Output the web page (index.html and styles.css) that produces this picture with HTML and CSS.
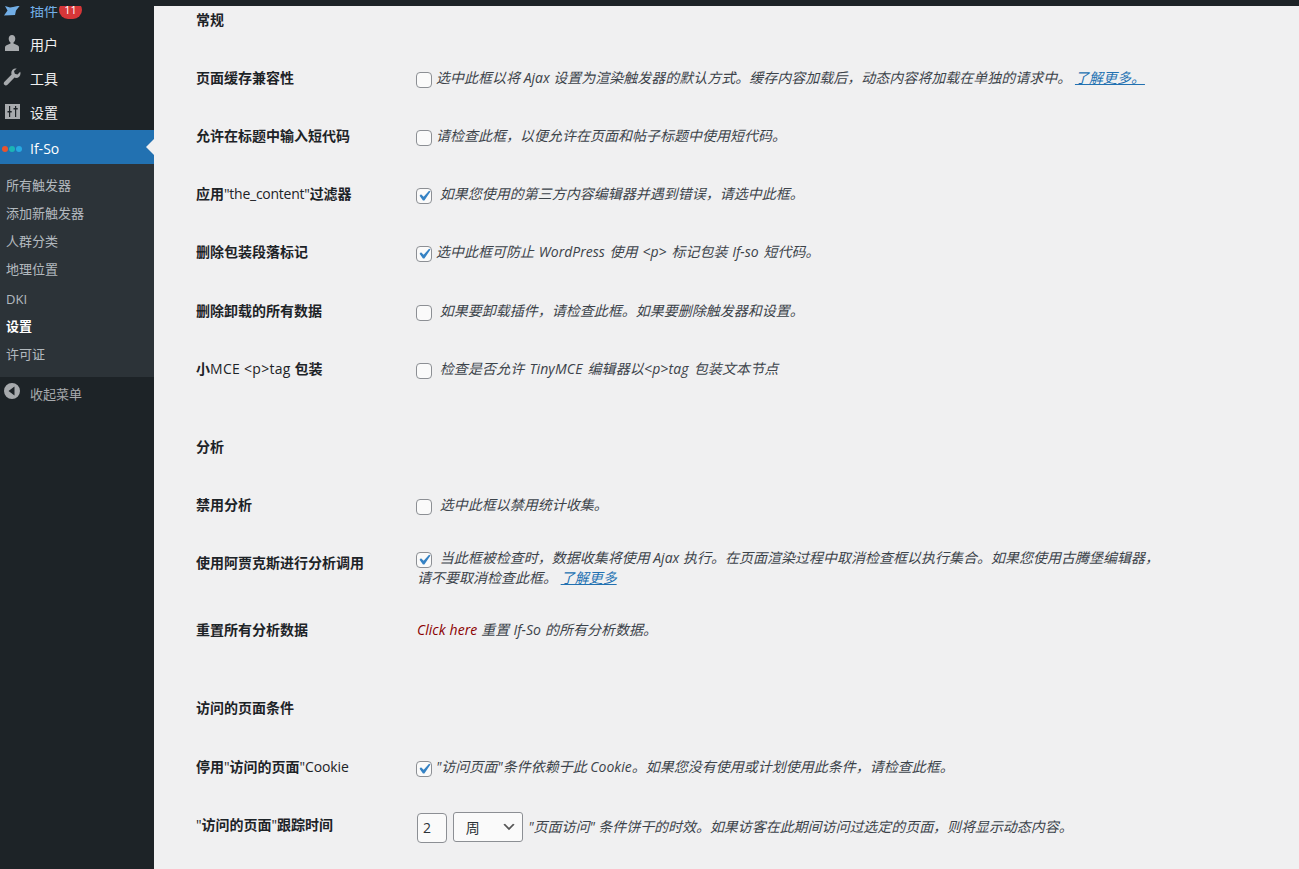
FILE: index.html
```html
<!DOCTYPE html>
<html lang="zh-CN">
<head>
<meta charset="utf-8">
<title>If-So 设置</title>
<link rel="stylesheet" href="styles.css">
</head>
<body>
<div class="adminbar"></div>
<div class="layout">
  <nav class="sidebar">
    <ul class="menu">
      <li class="item plugin">
        <svg class="icon" viewBox="0 0 20 20"><path d="M3 6l5 1.500 3-.5 7-1.500-4 5-1 4.500-11 .5 3.500-5z"/></svg>
        <span>插件</span><span class="badge">11</span>
      </li>
      <li class="item">
        <svg class="icon" viewBox="0 0 20 20"><path d="M10 2c2 0 3.300 1.700 3.300 3.700 0 1.500-.7 3-1.800 3.800v1l4 1.700c1 .5 1.500 1.200 1.500 2.300V18H3v-3.500c0-1.100.5-1.800 1.500-2.300l4-1.700v-1C7.400 8.700 6.700 7.200 6.700 5.700 6.700 3.700 8 2 10 2z"/></svg>
        <span>用户</span>
      </li>
      <li class="item">
        <svg class="icon" viewBox="0 0 20 20"><path d="M13.800 1.500c-2.600 0-4.500 2.100-4.500 4.500 0 .6.100 1.100.3 1.600L2.500 14.700c-1 1-1 2.300-.1 3.100.9.900 2.200.8 3.100-.1l7-7.100c.5.200 1 .3 1.500.3 2.500 0 4.500-2 4.500-4.500 0-.6-.1-1.100-.3-1.600l-2.700 2.700-2.700-.8-.8-2.700 2.700-2.500c-.4 0-.9 0-.9 0z"/></svg>
        <span>工具</span>
      </li>
      <li class="item">
        <svg class="icon" viewBox="0 0 20 20"><path fill-rule="evenodd" d="M3 3h15v15H3zM7 5v5H5.500v1.500H7V16h1.200v-4.500h1.500V10H8.200V5zM13 5v2h-1.500v1.500H13V16h1.200V8.500h1.500V7h-1.500V5z"/></svg>
        <span>设置</span>
      </li>
      <li class="item current">
        <span class="dots"><i class="dot red"></i><i class="dot teal"></i><i class="dot blue"></i></span>
        <span>If-So</span>
      </li>
    </ul>
    <ul class="submenu">
      <li>所有触发器</li>
      <li>添加新触发器</li>
      <li>人群分类</li>
      <li>地理位置</li>
      <li class="latin-item">DKI</li>
      <li class="active">设置</li>
      <li>许可证</li>
    </ul>
    <div class="item collapse">
      <svg class="icon" viewBox="0 0 20 20"><path fill-rule="evenodd" d="M10 2a8 8 0 1 1 0 16 8 8 0 0 1 0-16zM12.500 5.500L6.500 10l6 4.500z"/></svg>
      <span>收起菜单</span>
    </div>
  </nav>
  <main class="content">
    <section class="group">
      <div class="row"><h2 class="label">常规</h2></div>
      <div class="row">
        <div class="label">页面缓存兼容性</div>
        <div class="value"><input type="checkbox" class="check"><em>选中此框以将 Ajax 设置为渲染触发器的默认方式。缓存内容加载后，动态内容将加载在单独的请求中。 <a href="#">了解更多。</a></em></div>
      </div>
      <div class="row">
        <div class="label">允许在标题中输入短代码</div>
        <div class="value"><input type="checkbox" class="check"><em>请检查此框，以便允许在页面和帖子标题中使用短代码。</em></div>
      </div>
      <div class="row">
        <div class="label">应用<span class="latin narrow">"the_content"</span>过滤器</div>
        <div class="value"><input type="checkbox" class="check" checked> <em>如果您使用的第三方内容编辑器并遇到错误，请选中此框。</em></div>
      </div>
      <div class="row">
        <div class="label">删除包装段落标记</div>
        <div class="value"><input type="checkbox" class="check" checked><em class="wide">选中此框可防止 WordPress 使用 &lt;p&gt; 标记包装 If-so 短代码。</em></div>
      </div>
      <div class="row">
        <div class="label">删除卸载的所有数据</div>
        <div class="value"><input type="checkbox" class="check"> <em>如果要卸载插件，请检查此框。如果要删除触发器和设置。</em></div>
      </div>
      <div class="row">
        <div class="label">小<span class="latin spaced">MCE &lt;p&gt;tag</span> 包装</div>
        <div class="value"><input type="checkbox" class="check"> <em class="wide tracked">检查是否允许 TinyMCE 编辑器以&lt;p&gt;tag 包装文本节点</em></div>
      </div>
    </section>
    <section class="group">
      <div class="row"><h2 class="label">分析</h2></div>
      <div class="row">
        <div class="label">禁用分析</div>
        <div class="value"><input type="checkbox" class="check"> <em>选中此框以禁用统计收集。</em></div>
      </div>
      <div class="row">
        <div class="label">使用阿贾克斯进行分析调用</div>
        <div class="value"><input type="checkbox" class="check" checked> <em>当此框被检查时，数据收集将使用 Ajax 执行。在页面渲染过程中取消检查框以执行集合。如果您使用古腾堡编辑器，请不要取消检查此框。 <a href="#">了解更多</a></em></div>
      </div>
      <div class="row">
        <div class="label">重置所有分析数据</div>
        <div class="value"><em class="wide-s"><a class="danger" href="#">Click here</a> 重置 If-So 的所有分析数据。</em></div>
      </div>
    </section>
    <section class="group">
      <div class="row"><h2 class="label">访问的页面条件</h2></div>
      <div class="row">
        <div class="label">停用<span class="latin">"</span>访问的页面<span class="latin">"Cookie</span></div>
        <div class="value"><input type="checkbox" class="check" checked><em>"访问页面"条件依赖于此 Cookie。如果您没有使用或计划使用此条件，请检查此框。</em></div>
      </div>
      <div class="row">
        <div class="label"><span class="latin">"</span>访问的页面<span class="latin">"</span>跟踪时间</div>
        <div class="value controls">
          <input type="text" class="number" value="2">
          <select class="unit"><option>周</option></select>
          <em class="tight">"页面访问" 条件饼干的时效。如果访客在此期间访问过选定的页面，则将显示动态内容。</em>
        </div>
      </div>
    </section>
  </main>
</div>
</body>
</html>
```
FILE: styles.css
```css
* { box-sizing: border-box; }
html, body { margin: 0; height: 869px; overflow: hidden; }
body {
  background: #f0f0f1;
  color: #3c434a;
  font-family: "Open Sans", "Noto Sans CJK SC", sans-serif;
  font-size: 14px;
}
ul { list-style: none; margin: 0; padding: 0; }
.adminbar {
  position: absolute;
  top: 0; left: 0; right: 0;
  height: 6px;
  background: #1d2327;
  z-index: 5;
}
.layout { display: flex; align-items: flex-start; height: 869px; }
.sidebar {
  flex: 0 0 154px;
  height: 875px;
  margin-top: -6px;
  background: #1d2327;
  color: #f0f0f1;
}
.item {
  position: relative;
  display: flex;
  align-items: center;
  height: 34px;
  padding: 0 0 2px 30px;
}
.icon {
  position: absolute;
  left: 2px;
  top: 5px;
  width: 20px;
  height: 20px;
  fill: #a7aaad;
}
.plugin { color: #72aee6; }
.plugin .icon { fill: #72aee6; top: 6px; }
.badge {
  margin-left: 1px;
  height: 18px;
  min-width: 23px;
  padding: 0 5px;
  border-radius: 9px;
  background: #d63638;
  color: #fff;
  font-size: 11px;
  line-height: 18px;
  text-align: center;
}
.current { padding: 2px 0 0 30px; background: #2271b1; color: #fff; font-size: 14px; }
.current::after {
  content: "";
  position: absolute;
  right: 0;
  top: 50%;
  margin-top: -8px;
  border: 8px solid transparent;
  border-left-width: 0;
  border-right-color: #f0f0f1;
}
.dots { position: absolute; left: 2px; top: 16px; display: flex; gap: 1px; }
.dot { width: 6px; height: 6px; border-radius: 50%; }
.red { background: #e8542f; }
.teal { background: #1bb5b5; }
.blue { background: #27a9e1; }
.submenu { background: #2c3338; padding: 8px 0 9px; color: rgba(240, 246, 252, .7); font-size: 13px; }
.submenu li { height: 28px; line-height: 27px; padding-left: 6px; }
.submenu .latin-item { line-height: 30px; }
.submenu .latin-item ~ li { line-height: 29px; }
.submenu .active { color: #fff; font-weight: 700; }
.collapse { color: #a7aaad; font-size: 13px; }
.collapse .icon { top: 4px; left: 2px; }
.content { flex: 1; margin-top: -9.5px; padding-left: 42px; min-width: 0; }
.group { margin-bottom: 20px; }
.row { display: grid; grid-template-columns: 221px 1fr; min-height: 58.2px; }
.label {
  margin: 0;
  padding: 20px 10px 20px 0;
  font-size: 14px;
  font-weight: 700;
  line-height: 18.2px;
  color: #1d2327;
}
.latin { font-weight: 500; letter-spacing: -.1px; }
.narrow { letter-spacing: -.25px; }
.spaced { letter-spacing: .3px; }
.value { align-self: center; padding: 13.6px 130px 13.6px 0; line-height: 19.6px; }
.value em { font-style: italic; }
.wide { word-spacing: 1.2px; }
.wide-s { word-spacing: .5px; }
.tracked { letter-spacing: .13px; }
.tight { letter-spacing: -.05px; }
.controls { align-self: start; padding: 17px 0 0; }
a { color: #2271b1; }
.danger { color: #8b0000; text-decoration: none; }
.check {
  appearance: none;
  display: inline-block;
  width: 16px;
  height: 16px;
  margin: 0 4px 0 -1px;
  padding: 0;
  border: 1px solid #8c8f94;
  border-radius: 4px;
  background: #fafafa;
  vertical-align: -5px;
}
.check:checked {
  background: #fafafa url("data:image/svg+xml;utf8,<svg xmlns='http://www.w3.org/2000/svg' viewBox='0 0 20 20'><path fill='%233582c4' d='M14.830 4.890l1.340.940-5.810 8.380H9.020L5.780 9.670l1.340-1.250 2.570 2.400z'/></svg>") center / 21px no-repeat;
}
.number {
  width: 30px;
  height: 30px;
  padding: 0 5px;
  border: 1px solid #8c8f94;
  border-radius: 4px;
  background: #fafafa;
  color: #2c3338;
  font: 14px "Open Sans", sans-serif;
  vertical-align: middle;
}
.unit {
  appearance: none;
  width: 70px;
  height: 30px;
  margin: -2px 2px 0 2px;
  padding: 0 24px 0 12px;
  border: 1px solid #8c8f94;
  border-radius: 3px;
  background: #fafafa url("data:image/svg+xml;utf8,<svg xmlns='http://www.w3.org/2000/svg' viewBox='0 0 20 20'><path fill='%23555' d='M5 6l5 5 5-5 2 1-7 7-7-7 2-1z'/></svg>") right 5px top 55% / 16px no-repeat;
  color: #2c3338;
  font: 14px "Noto Sans CJK SC", sans-serif;
  vertical-align: middle;
}
```
